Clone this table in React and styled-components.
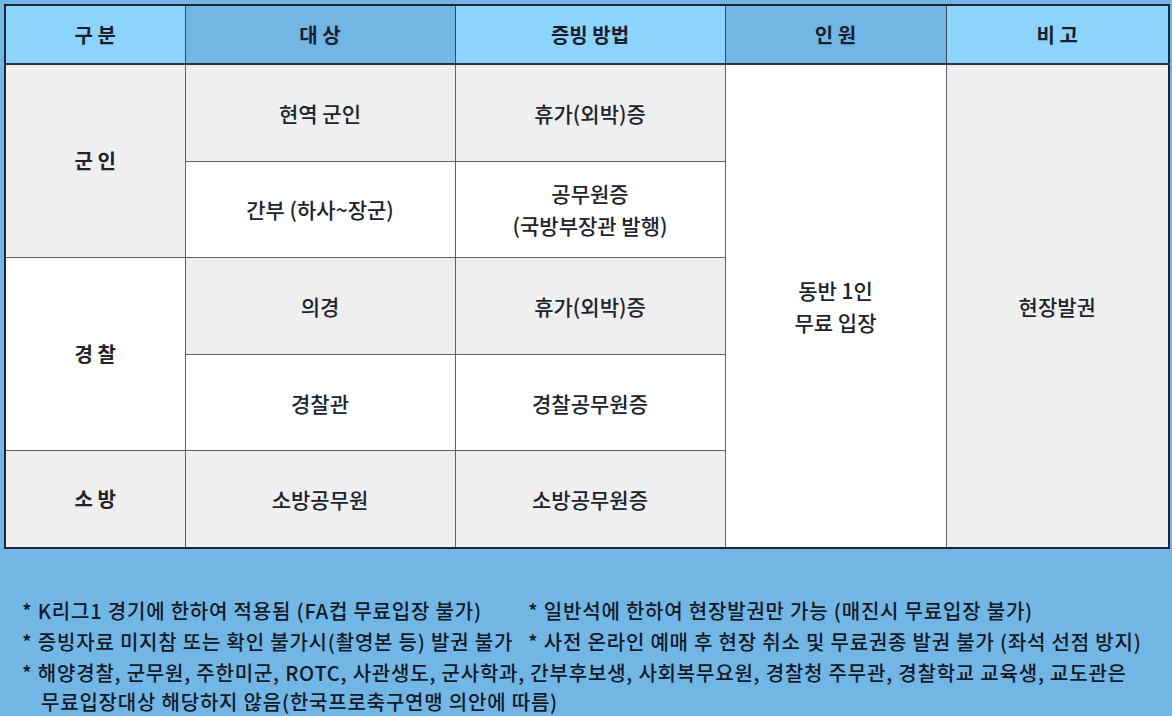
import React from 'react'
import styled, { createGlobalStyle } from 'styled-components';

const GlobalStyle = createGlobalStyle`
  html, body {
    margin: 0;
    padding: 0;
    background: #72b6e5;
  }
  body {
    font-family: "Noto Sans CJK KR", "Noto Sans", sans-serif;
    color: #1b1f2a;
  }
`;

const Page = styled.div`
  width: 1172px;
  height: 716px;
  padding: 4px 4px 0 4px;
  box-sizing: border-box;
  overflow: hidden;
`;

const Table = styled.table`
  width: 1164px;
  border-collapse: collapse;
  table-layout: fixed;
  border: 2px solid #1d2636;
`;

const HeadCell = styled.th`
  height: 57px;
  padding: 0;
  background: ${p => (p.$dark ? '#72b6e5' : '#8dd4fc')};
  border: 1px solid #3c4657;
  border-bottom: 2px solid #2a3344;
  font-size: 20px;
  font-weight: 700;
  color: #1a1f2c;
  text-align: center;
  vertical-align: middle;
`;

const Cell = styled.td`
  height: 95.6px;
  padding: 0;
  background: ${p => (p.$gray ? '#efefef' : '#ffffff')};
  border: 1px solid #5a6172;
  font-size: ${p => (p.$bold ? '20px' : '21px')};
  font-weight: ${p => (p.$bold ? 700 : 500)};
  color: #20232c;
  text-align: center;
  vertical-align: middle;
  line-height: 32px;
`;

const Notes = styled.div`
  margin-top: 46px;
  padding-left: 18px;
  display: grid;
  grid-template-columns: 506px 1fr;
  font-size: 20px;
  font-weight: 500;
  line-height: 31px;
  color: #141a26;
  letter-spacing: 0.8px;
  white-space: nowrap;
`;

const Wide = styled.div`
  grid-column: 1 / 3;
  padding-left: ${p => (p.$indent ? '19px' : '0')};
  line-height: ${p => (p.$indent ? '28px' : '31px')};
`;

export default function App() {
  return (
    <Page>
      <GlobalStyle />
      <Table>
        <colgroup>
          <col style={{ width: 180 }} />
          <col style={{ width: 270 }} />
          <col style={{ width: 270 }} />
          <col style={{ width: 221 }} />
          <col style={{ width: 223 }} />
        </colgroup>
        <thead>
          <tr>
            <HeadCell>구 분</HeadCell>
            <HeadCell $dark>대 상</HeadCell>
            <HeadCell>증빙 방법</HeadCell>
            <HeadCell $dark>인 원</HeadCell>
            <HeadCell>비 고</HeadCell>
          </tr>
        </thead>
        <tbody>
          <tr>
            <Cell $gray $bold rowSpan={2}>군 인</Cell>
            <Cell $gray>현역 군인</Cell>
            <Cell $gray>휴가(외박)증</Cell>
            <Cell rowSpan={5}>동반 1인<br />무료 입장</Cell>
            <Cell $gray rowSpan={5}>현장발권</Cell>
          </tr>
          <tr>
            <Cell>간부 (하사~장군)</Cell>
            <Cell>공무원증<br />(국방부장관 발행)</Cell>
          </tr>
          <tr>
            <Cell $bold rowSpan={2}>경 찰</Cell>
            <Cell $gray>의경</Cell>
            <Cell $gray>휴가(외박)증</Cell>
          </tr>
          <tr>
            <Cell>경찰관</Cell>
            <Cell>경찰공무원증</Cell>
          </tr>
          <tr>
            <Cell $gray $bold>소 방</Cell>
            <Cell $gray>소방공무원</Cell>
            <Cell $gray>소방공무원증</Cell>
          </tr>
        </tbody>
      </Table>
      <Notes>
        <div>* K리그1 경기에 한하여 적용됨 (FA컵 무료입장 불가)</div>
        <div>* 일반석에 한하여 현장발권만 가능 (매진시 무료입장 불가)</div>
        <div>* 증빙자료 미지참 또는 확인 불가시(촬영본 등) 발권 불가</div>
        <div>* 사전 온라인 예매 후 현장 취소 및 무료권종 발권 불가 (좌석 선점 방지)</div>
        <Wide>* 해양경찰, 군무원, 주한미군, ROTC, 사관생도, 군사학과, 간부후보생, 사회복무요원, 경찰청 주무관, 경찰학교 교육생, 교도관은</Wide>
        <Wide $indent>무료입장대상 해당하지 않음(한국프로축구연맹 의안에 따름)</Wide>
      </Notes>
    </Page>
  );
}
